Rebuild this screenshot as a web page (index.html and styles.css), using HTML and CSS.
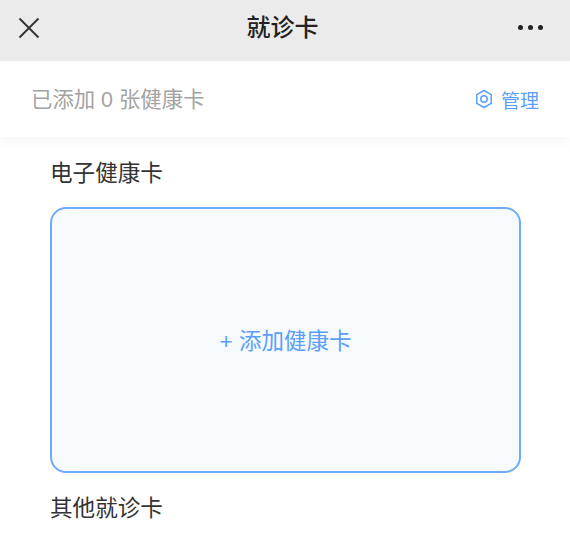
FILE: index.html
```html
<!DOCTYPE html>
<html lang="zh-CN">

<head>
  <meta charset="UTF-8">
  <meta name="viewport" content="width=device-width, initial-scale=1.0">
  <title>就诊卡</title>
  <link rel="stylesheet" href="styles.css">
</head>

<body>
  <header class="nav-bar">
    <svg class="nav-close" width="22" height="22" viewBox="0 0 22 22">
      <path d="M1.5 1.5L20.5 20.5M20.5 1.5L1.5 20.5" fill="none" stroke="#333" stroke-width="1.9" />
    </svg>
    <h1 class="nav-title">就诊卡</h1>
    <div class="nav-more">
      <span class="nav-dot"></span>
      <span class="nav-dot"></span>
      <span class="nav-dot"></span>
    </div>
  </header>

  <div class="summary-bar">
    <span class="summary-text">已添加 0 张健康卡</span>
    <a class="manage-link">
      <svg width="18" height="20" viewBox="0 0 18 20">
        <path d="M9 1.5L16.2 5.7V14.3L9 18.5L1.8 14.3V5.7Z" fill="none" stroke="#5b9ffa" stroke-width="1.5" stroke-linejoin="round" />
        <circle cx="9" cy="10" r="3.2" fill="none" stroke="#5b9ffa" stroke-width="1.5" />
      </svg>
      <span>管理</span>
    </a>
  </div>

  <main class="content">
    <h2 class="section-title">电子健康卡</h2>
    <div class="add-card">+ 添加健康卡</div>
    <h2 class="section-title">其他就诊卡</h2>
  </main>
</body>

</html>
```

FILE: styles.css
```css
* {
  box-sizing: border-box;
}

body {
  margin: 0;
  background-color: #fff;
  font-family: "Liberation Sans", "Noto Sans CJK SC", sans-serif;
  overflow: hidden;
}

.nav-bar {
  height: 61px;
  padding: 0 27px 6px 18px;
  display: flex;
  align-items: center;
  justify-content: space-between;
  background-color: #ebebeb;
}

.nav-title {
  margin: 0;
  padding: 0 0 4px 7px;
  font-size: 24px;
  font-weight: 500;
  color: #222;
}

.nav-more {
  display: flex;
  gap: 5px;
}

.nav-dot {
  width: 5px;
  height: 5px;
  border-radius: 50%;
  background-color: #222;
}

.summary-bar {
  height: 76px;
  padding: 0 31px;
  display: flex;
  align-items: center;
  justify-content: space-between;
  background-color: #fff;
  box-shadow: 0 4px 12px rgba(0, 0, 0, 0.04);
}

.summary-text {
  padding-bottom: 4px;
  font-size: 21.4px;
  color: #a3a3a3;
}

.manage-link {
  display: flex;
  align-items: center;
  gap: 8px;
  font-size: 19px;
  color: #5b9ffa;
}

.content {
  padding: 22px 49px 0 50px;
}

.section-title {
  margin: 0;
  font-size: 22.6px;
  font-weight: 400;
  line-height: 30px;
  color: #333;
}

.add-card {
  height: 266px;
  margin: 18px 0 21px;
  padding-bottom: 2px;
  display: flex;
  align-items: center;
  justify-content: center;
  background-color: #f6fafd;
  border: 2px solid #6fabf8;
  border-radius: 16px;
  font-size: 22.5px;
  color: #5b9ffa;
}
```
